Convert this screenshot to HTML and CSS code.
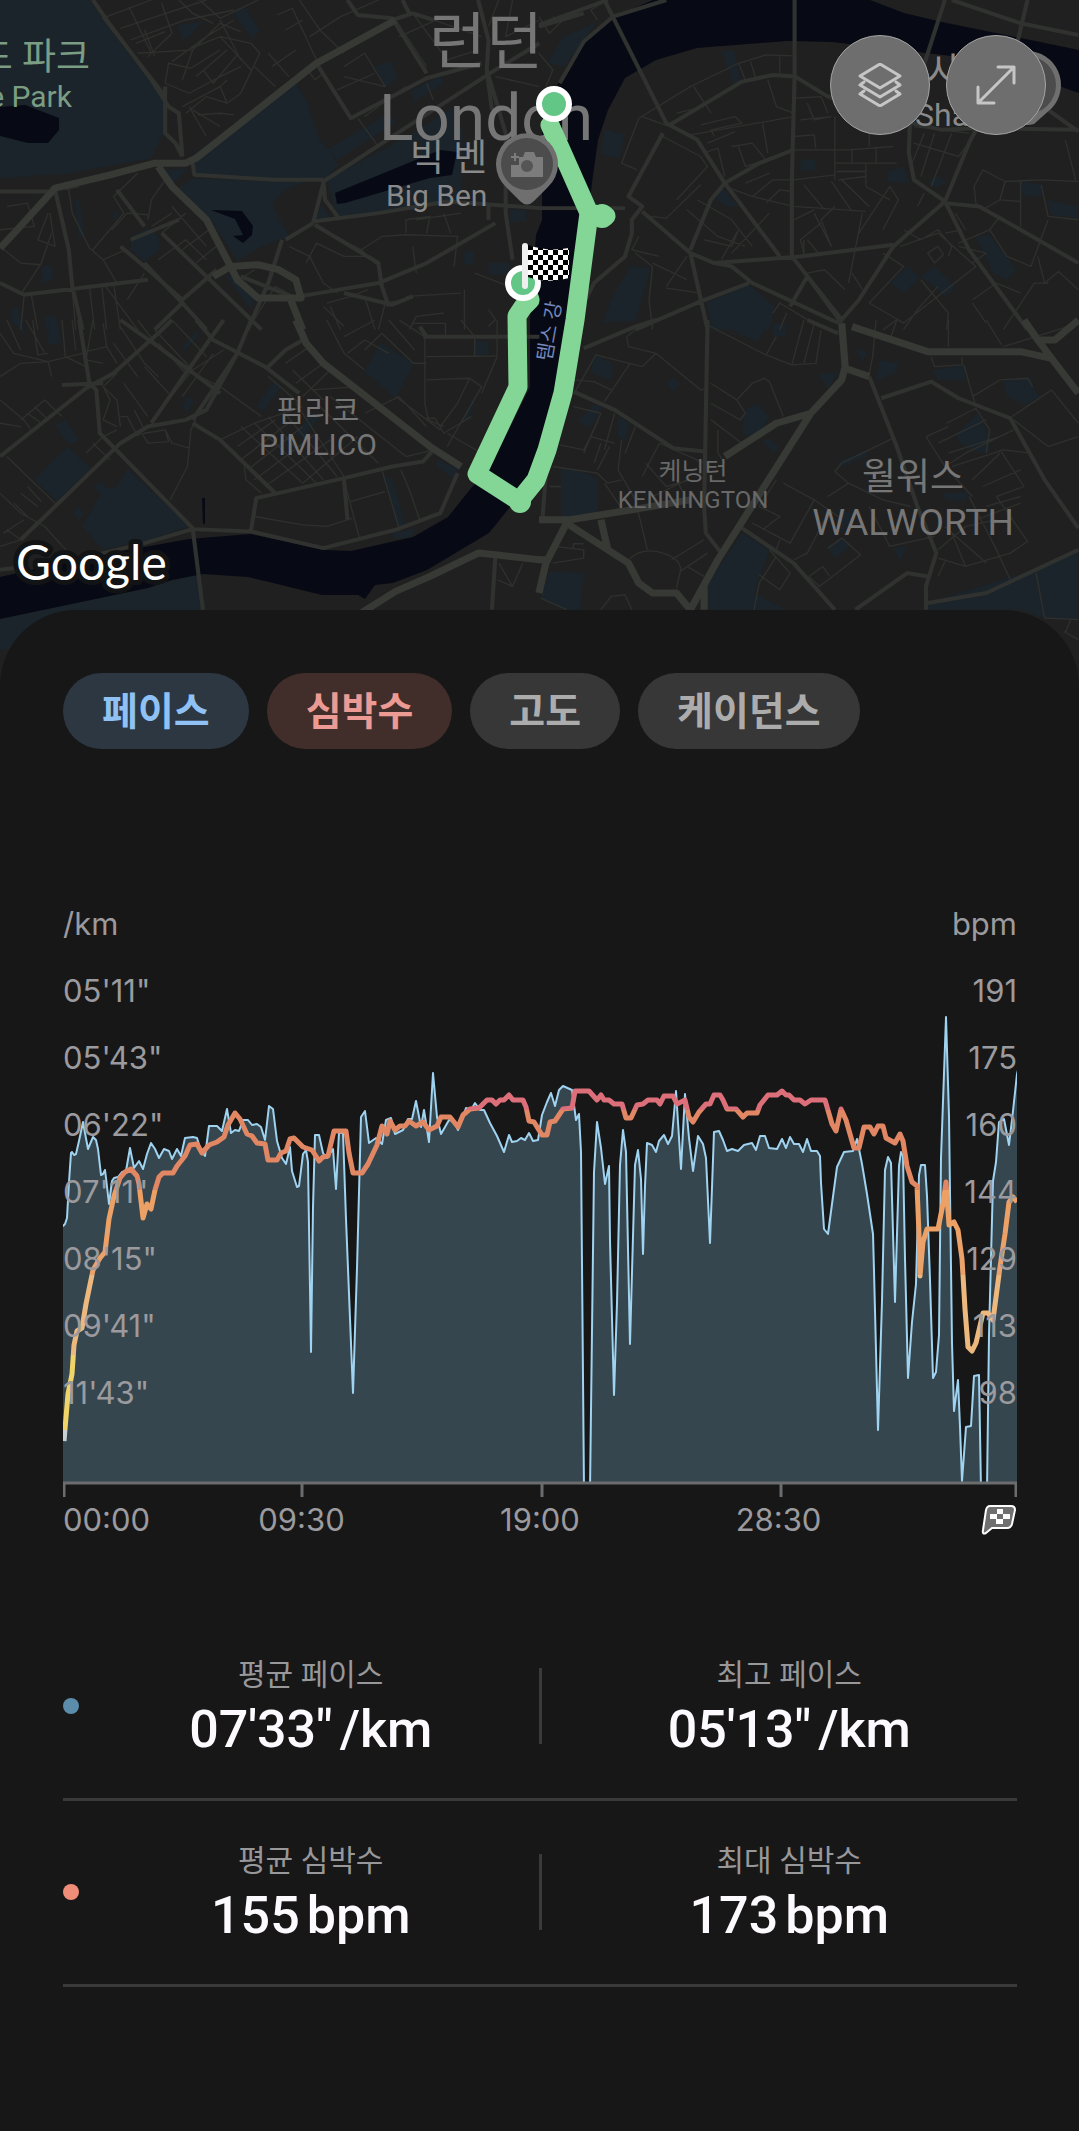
FILE: index.html
```
<!DOCTYPE html>
<html lang="ko">
<head>
    <meta charset="UTF-8">
    <meta name="viewport" content="width=device-width, initial-scale=1.0">
    <title>러닝 상세</title>
    <link rel="stylesheet" href="styles.css">
</head>
<body>
    <div class="map">
        <svg class="map-svg" viewBox="0 0 1079 690">
            <defs>
                <pattern id="checker" x="528" y="245" width="10" height="10" patternUnits="userSpaceOnUse">
                    <rect width="10" height="10" fill="#fff"/>
                    <path d="M0 0h5v5h-5zM5 5h5v5h-5z" fill="#000"/>
                </pattern>
            </defs>
            <rect width="1079" height="690" fill="#202020"/>

            <!-- Parks -->
            <g class="park">
                <g transform="scale(.344 .333)">
                    <path d="M0 0H260L300 60L440 250L475 300L475 400L440 475L200 520L0 535z"/>
                    <path d="M560 465L860 250L890 300L930 420L985 495L940 545L560 525z"/>
                    <path d="M520 565L560 535L790 545L900 540L830 570L790 610L840 710L750 745L690 785L620 670z"/>
                    <path d="M950 540L1200 400L1320 320L1345 400L1340 600L980 655z"/>
                    <path d="M480 510L550 505L500 550zM680 30L715 25L755 90L735 115L690 60zM515 75L590 65L550 110L530 120zM1090 200L1140 185L1155 235L1120 265zM1195 270L1280 230L1290 250L1205 305zM950 450L1130 340L1150 370L980 480z"/>
                    <path d="M380 710L430 685L465 715L465 750L420 785L380 750zM218 600L232 600L245 710L228 710zM325 640L350 635L335 665zM120 800L150 795L155 840L125 850zM1350 755H1378V795H1350zM1420 790H1480V825H1420zM1480 630H1530V665H1480zM915 665L935 615L960 655zM650 820L690 840L740 890L730 930zM30 930L50 920L65 985L35 970zM130 950L160 950L165 990H135z"/>
                </g>
                <g transform="translate(539) scale(.344 .333)">
                    <path d="M25 190L70 110L170 65L130 120L75 200zM530 155L568 150L585 245L565 250zM190 390L250 405L235 475L180 465zM760 480H805V512H760zM1015 515L1060 500L1078 550L1010 545zM1130 545L1160 528L1185 550L1150 562zM515 600L530 560L580 620L545 620zM1400 545L1460 555V590L1405 585zM1475 600L1568 620V655L1490 645z"/>
                    <path d="M265 800L325 805L280 965L185 968L210 900zM485 910L610 855L685 920L670 990H505zM1270 710L1310 705L1388 810L1360 840L1320 820zM1020 850L1070 800L1110 835L1060 880zM1110 830L1150 800L1212 865L1180 890z"/>
                </g>
                <g transform="translate(0 320) scale(.344 .333)">
                    <path d="M0 897L150 865L430 805L560 765H580L590 870V990H0z"/>
                    <path d="M100 480L195 380L265 445L165 545zM240 620L300 510L340 500L370 445L550 620L420 665L300 690zM160 315L190 300L230 360L200 375zM270 500L295 485L320 515L300 530zM210 575L230 560L245 585L230 600zM140 0H165L178 70L140 72zM35 0H65L70 45zM530 80L575 30L580 45L535 95zM545 230L565 245L545 275L528 262zM745 260L795 185L820 200L765 275zM860 345L905 275L930 290L880 355zM1060 155L1105 68L1202 130L1150 235zM1380 60L1420 65V105H1382zM1345 295L1375 235L1380 250L1355 305zM1115 470L1140 475L1180 620L1155 620zM1270 420L1330 445L1315 475L1270 440zM1140 640L1210 625L1190 655L1145 655z"/>
                </g>
                <g transform="translate(539 320) scale(.344 .333)">
                    <path d="M485 800L590 640L670 690L625 820L720 870H490zM1130 850L1440 750L1568 690V900L1470 895L1400 870H1130zM5 830L30 755L130 760L120 870H70zM65 440L120 455L172 475V590H65zM500 0H670L635 65L590 45zM680 10L720 15L715 50L680 45zM160 105L215 130L210 180L150 160zM370 190L390 172L412 192L390 215zM110 305L160 255L185 255L150 325zM230 290L265 310L250 365L228 350z"/>
                    <path d="M590 340L600 270L630 250L670 290L640 340L610 350zM650 365L665 355L700 380L680 400zM810 160H870L840 205zM920 85L955 95L940 130zM990 120L1045 130L1040 155L980 185zM1145 150L1235 135L1240 180H1160zM1350 185L1430 170L1440 210L1460 230L1410 255L1360 230zM1210 345L1275 280L1300 330L1310 395L1280 400L1225 370zM870 425L950 390L955 410L880 440zM840 685L880 655L905 680L862 715zM870 570L910 580L880 645zM1175 520L1250 515L1240 545L1180 540zM1030 685L1070 680L1050 725z"/>
                </g>
            </g>

            <!-- Thames and lakes -->
            <g class="water">
                <path d="M653 0L613 17L584 43L558 83L542 130L542 220L536 235L530 320L530 387L489 470L472 487L448 517L413 537L351 551L324 550L251 534L189 539L83 558L0 577V619L148 588L172 580L203 574L248 577L269 582L322 595L358 595L365 599L375 585L393 583L427 570L489 533L510 507L539 453L554 397L580 283L592 183L598 140L608 110L625 78L656 60L697 48L787 41L832 42L985 60L1079 93V50L942 22L904 13L870 0z"/>
                <path d="M0 107L25 105L59 118V130L48 143H28L0 136zM211 210L242 211L253 226L252 235L243 243L233 236L243 235L235 219zM335 193L440 150L457 152L452 175L430 178L345 203L337 204zM202 498h3v26h-2z"/>
            </g>

            <!-- Side streets -->
            <g class="street">
                <g transform="scale(.344 .333)">
                    <path d="M310 50L440 0M350 85L600 0M380 120L540 60L680 30M400 160L560 150L640 70L700 95M430 170L500 100L470 10M375 20L440 160M420 90L450 170M395 130L480 95M520 0L560 40L620 70M555 145L640 110L730 130M560 150L530 240M480 250L490 190L555 205L640 150M500 185L600 110L680 60M590 210L620 250L690 165M640 110L730 210M570 230L660 150M530 320L640 260L660 240M540 340L600 290L660 310L700 280M600 410L550 320M640 380L560 330M575 345L640 340L680 345M660 310L640 260M480 250L550 280L640 230L700 200M730 130L755 160L700 280"/>
                    <path d="M580 0L640 55L750 0M640 60L700 180M805 45L850 25L920 180M830 90L880 60M870 0L930 90L1000 160M900 110L990 50L1100 0M740 200L800 260M780 160L840 230M790 200L860 150M895 210L915 240L940 220M1000 200L1060 160L1120 260L1000 230M1060 350L1180 260M980 270L1090 220M1150 60L1240 200M1200 40L1300 180L1390 150M1240 250L1260 300M1160 110L1270 60M1100 440L1040 355M1450 0L1420 80M1490 0L1470 110L1568 60M1260 60L1400 110M1440 230L1568 260"/>
                    <path d="M200 570L210 640L260 745L300 780L365 750M190 570L230 560M20 620L80 610L100 680L0 690M0 740L60 790L120 795M140 640L110 720L160 740L145 640M60 885L120 790L150 700M270 750L360 640L330 590L400 520M325 690L370 640L430 645M430 660L440 600L480 540M440 680L500 640M470 700L540 640M530 750L620 680M570 790L640 730M500 620L600 740M460 780L540 720L600 780M90 880L110 990M70 890L60 990M210 870L220 990M260 860L275 990M295 850L310 990M330 850L350 990M300 780L340 850L420 840M370 900L420 820M400 990L300 850"/>
                    <path d="M680 850L740 810M720 990L800 860L870 900M920 680L1050 750L1110 710L1180 705L1330 710L1320 800M1180 700V660L1250 650L1240 700M1210 660L1340 640M890 790L920 730L1000 770L1080 770M840 740L900 770L940 850L980 880M1050 750L1100 800L1110 850M960 920L990 990M1060 890L1090 990M1100 990L1120 910L1180 900M1180 890L1340 880M1350 870V990M1380 820L1480 860M1190 990L1210 950L1290 940M1200 740L1210 820M1290 640L1310 700M950 910L1020 890L1070 870M940 920L1000 980M1420 930L1440 960L1420 980"/>
                </g>
                <g transform="translate(539) scale(.344 .333)">
                    <path d="M0 50L30 100L65 65L40 50M150 30L200 0M150 30L170 60M0 160L40 210L20 260M290 355L240 490L285 510M290 355L440 260L580 190L660 165L740 168M300 350L380 380M450 260L500 340M400 340L480 320M580 190L600 240M615 185L630 235M665 240L690 320L740 340M700 170V225M440 405L660 365L740 350M470 375L570 350L590 370L500 390L510 410M490 430L570 395M650 370L665 460M740 410L800 405L805 445M740 295L820 290L840 340M760 360L850 350M780 310L800 360L850 350M860 350V540M560 440L620 430L660 480L600 500L580 440M480 460L520 445L540 530M360 410L470 470L490 500L400 600M740 450L900 450L1030 440M860 490H1040M865 515H950M980 440V490M910 450V490M950 490V560L1020 600M960 350V440M870 540L950 530M540 560L620 590L740 620L950 635M600 550L670 520M740 540L860 525M620 590L680 540L740 540M660 610L700 570L740 575M770 555L830 630M850 545L910 635M880 540L960 620M800 640L850 740M770 760L760 720L820 670M820 770L780 720M850 740L820 660L860 620"/>
                    <path d="M1090 430L1220 470M1120 400L1080 500M1150 400L1110 530M1200 400L1140 560M1090 380L1250 400M1290 510L1265 560L1270 610L1290 630L1340 600L1355 545L1290 510M1355 545L1460 540L1568 545M1400 545V680M1460 555L1480 650L1568 660M1340 600L1400 605M1310 690L1340 650M1220 730L1310 690L1360 770L1430 800L1480 660M1450 770L1470 850L1510 815L1568 870M1180 700L1230 690M1100 620L1120 580M1220 470L1270 400M1210 640L1240 690M1220 740L1300 760L1260 790M1560 540L1530 420"/>
                    <path d="M320 650L370 655L470 555M290 710L270 750L350 770M280 760L330 800L320 900L330 990M370 860L430 770M370 865L470 880M330 790L430 840M430 630L520 710L600 740M460 600L560 660L620 740M480 720L560 740L580 690M580 690L530 780M670 640L560 760M740 660L800 630M770 720V770M940 640L900 850M930 700L1020 560L1045 600L1000 690M910 820L940 870M780 820L830 810L890 870M1000 760L1060 800L960 910L1060 970L1270 800L1160 700L1050 740M1060 690L1110 720L1160 690L1200 740L1190 770M1130 760L1160 740L1175 765L1150 790zM1110 840L1190 940L1185 990M1160 860L1100 930L1060 990M1260 900L1330 850L1400 880M1300 970L1260 910M1350 990L1440 850L1480 850M680 940L700 910L780 960M700 990L720 940M1000 990L1040 960L1060 970"/>
                </g>
                <g transform="translate(0 320) scale(.344 .333)">
                    <path d="M0 40L40 100L140 125L240 100M75 0L130 100M95 0L110 105L140 100M20 0L60 90M0 170L60 130L140 125L150 170M180 0L190 110L250 140M210 0L220 90M270 0L250 120L300 130M300 10L310 80L250 95M310 80L340 130M330 70L400 170M350 20L420 130L460 170M0 240L70 300L90 330M0 310L60 320M60 300L130 240L180 290M80 280L120 310M100 260L140 300M340 160L300 200L320 240L300 300L340 320M300 200L340 240L350 320M350 290L370 290L400 350M390 270L420 330M360 190L430 290M420 140L490 220M460 70L540 160M340 330L300 350L250 400M270 370L320 420M20 410L100 490L160 550M0 520L60 580L130 620L200 700M10 640L70 600M0 680L60 660M20 630L60 660L100 620M60 520L110 560M40 550L80 590M80 500L120 545M380 350L420 340L480 330L490 365L430 370L415 345M480 330L500 370L550 385L555 330L570 300M550 385L545 440L495 540M450 290L560 150"/>
                    <path d="M400 0L460 80L540 150L640 200L760 290M500 0L600 110M450 30L560 150M620 100L530 230M560 150L650 90M640 360L740 310L880 260M700 320L880 490M740 310L920 490M780 290L940 480M820 270L980 470M860 250L1000 470M690 380L800 300M700 420L850 300M720 450L880 320M740 480L920 340M770 500L960 360M880 490L1040 350M710 440L715 480L760 520M930 260L1100 430M960 230L1180 410L1260 390M910 210L1040 200M880 230L960 150M780 170L870 250M850 150L940 240M830 130L900 80L940 130L860 190M1060 280L1160 230L1240 320"/>
                    <path d="M950 0L1000 100L1060 150M1000 50L1090 0M1060 90L1110 40L1202 130L1240 130M1160 0L1235 50V250L1245 300L1290 320M1130 0L1205 90M1240 110L1445 108V0M1240 180L1365 175L1400 200L1300 380M1365 175L1330 250L1280 320M1240 295H1265L1290 340L1370 290M1060 60L1130 100M1200 10H1295V50M1340 0L1380 50V110M1445 110L1400 220M1300 340L1400 400M1010 100L1060 60M1150 230L1280 330M1000 480L1045 655M1020 545L1120 515M1110 450L1160 625M1165 450L1190 510L1220 600M740 590L880 615L950 620L1025 595M1450 730L1490 800L1520 730M1445 780L1490 800"/>
                </g>
                <g transform="translate(539 320) scale(.344 .333)">
                    <path d="M490 15L660 105L735 135L805 130L820 30M770 0L735 135M800 10L770 130M660 105L690 50M280 30L255 50L260 80L340 100L300 140L165 105L105 215M340 100L470 210L490 205M265 130L190 245M100 180L160 185L210 210M500 190L575 240L600 280L585 300L500 250M575 240L620 190L655 175L670 185L710 290M500 300L590 370M520 330V400L540 430M100 260L180 280L130 400M60 375L130 390L150 350L220 370M180 280L150 350M220 280L190 390M160 430L180 370M170 450L205 380M240 360L230 450L280 540L315 690M280 320L250 400M350 370L300 470M40 440L170 460L200 490L240 480M30 500L65 500M190 490L250 580M350 370L480 430M310 430L370 500L440 480M400 480L440 560M330 530L430 480"/>
                    <path d="M260 720Q300 680 360 700T410 760T400 805M385 720L480 660M410 755L490 700M430 740L480 770M690 480L640 560L700 590L650 630M620 610L730 670L800 540L710 490M700 660L690 690M880 430L1030 355M880 430L860 455L900 490L840 530M900 490L1000 540L1080 560M800 540L870 590M840 685L880 655L935 705L815 800L785 770L825 740L845 770M740 720L780 700L830 600M670 690L730 760L700 810L640 765M690 710L640 790L625 870M960 560L1020 680L1150 650M980 0L970 110L960 160M1190 0V80M1040 0L1020 60M1300 0L1345 75M1568 10L1350 80M1140 110L1150 140L1230 135V110M1235 135L1270 260M1260 230L1340 180L1420 175L1435 200M1375 290L1490 210L1568 310M1380 300L1480 380L1568 350M1185 310L1270 265L1310 330L1300 400M1125 350L1190 320M1125 350L1180 440L1240 400M1160 370L1300 300M1190 400L1340 350M1240 400L1380 330M1200 440L1350 390L1430 400M1180 440L1260 530M1260 480L1340 400M1290 500L1400 450M1340 390L1410 500L1330 530L1420 665L1370 700L1240 740L1160 715M1250 530L1330 690L1370 780M1270 600L1400 550M1180 620L1300 730M1160 690L1240 620L1330 600M1200 640L1240 740M1300 560L1400 530M1160 770L1180 725M40 680L130 690V715L40 730M100 690V672H130M180 870L210 830L250 825L270 870M5 835L80 870M1445 760L1470 895L1568 900M1530 940L1545 900M1525 935L1568 960"/>
                </g>
            </g>

            <!-- Through roads -->
            <g class="road">
                <g transform="scale(.344 .333)">
                    <path d="M270 0L310 60L440 240L490 320L520 340L530 470M480 260L480 400L510 430L530 470M300 50L480 290M920 190L1020 355L1240 235L1400 190M1010 0L1040 45L1140 55L1240 220M1140 60L1200 40L1260 60M1170 0L1190 40M1415 210L1430 330M1390 0L1420 120L1415 210L1470 400V640L1490 780M1568 130L1440 210L1350 270L1200 370L940 545L945 600L985 655M940 550L910 670M910 665L1100 640L1300 605L1568 625M915 675L1100 790L1110 860L1130 920M870 890L1100 850L1240 790L1440 670M1420 620V660M160 570L200 750L210 860L240 990M0 575H140M0 850L70 885L430 840M470 700L760 990M420 790L530 910L600 990M380 720L520 660M350 740L420 800L530 900L630 810M530 910L450 990M420 680L340 570M820 720L780 850L720 990M910 670L830 720M470 510L500 550M560 490L565 525L800 540H940M1000 880L1140 915L1200 890M870 900L700 830"/>
                </g>
                <g transform="translate(539) scale(.344 .333)">
                    <path d="M0 75L200 0M190 0L370 370L460 420L540 550L700 770M0 80L130 40M215 50L370 0M215 50L130 125L60 250M743 0V230L735 540L735 770M380 375L590 245L680 225L745 230L840 290L1000 350L1170 390L1270 385L1568 390M1180 0L1080 320L1075 460L1090 540L1180 605L1250 430L1270 390M1420 0L1390 130M1200 0L1400 70L1568 105M360 400L260 590L300 620L270 660V700L250 770L160 850L120 930M0 625H250M300 635L440 760L510 790L760 770L1030 735M440 760L490 990M510 790L560 800L620 850L870 970M540 550L500 600L440 750M540 550L640 490L740 450M735 770L880 960L930 900L1030 740L1180 605L1250 750L1420 990M1180 610L1280 620L1400 690L1568 790M780 830L730 920M280 990L470 905L610 850M880 970L780 830M1480 330L1568 395"/>
                </g>
                <g transform="translate(0 320) scale(.344 .333)">
                    <path d="M230 0L260 190L280 210L290 340L560 625L590 870M350 0L460 80L640 220M0 410L250 205L330 160L460 40L500 0M180 195L300 190M60 660L350 370L430 320L540 300L600 270L690 100L730 0M650 0L540 160L440 310M570 0L620 60L770 140L870 220M560 310L640 360L800 520M690 100L560 300M780 140L830 90L880 60M240 715L420 670L560 628L730 635L940 685L1150 630L1280 580L1330 460M730 630L745 535L1000 475L1140 440L1230 425L1260 390M1230 50H1568M1440 710L1430 870M0 750L80 740M1220 20L1240 50M1010 600L1000 480"/>
                </g>
                <g transform="translate(539 320) scale(.344 .333)">
                    <path d="M490 0L480 560L485 640L530 700M130 85L280 20L340 0M100 215L220 270L390 385L480 395M995 235L1140 185L1220 235L1370 295L1470 480L1568 625M960 170L1040 380L1100 560L1155 700L1125 800V870M590 625L740 730L860 870M920 870L1070 760L1130 770M1130 850L1300 820L1568 690M780 0L870 40M20 460L10 600"/>
                </g>
            </g>

            <!-- Main roads -->
            <g class="main-road">
                <g transform="scale(.344 .333)">
                    <path d="M0 745L50 690L160 565L320 525L450 490L540 490L570 475L920 190L1150 60M460 500L500 560L600 660L670 800L750 795L810 810L860 840L875 895L750 895L690 840L670 800M670 800L620 830M845 900L880 990"/>
                </g>
                <g transform="translate(0 320) scale(.344 .333)">
                    <path d="M860 0L890 70L940 130L1250 380L1340 440M1050 880L1150 815L1250 770L1390 700L1440 705L1568 720"/>
                </g>
                <g transform="translate(539 320) scale(.344 .333)">
                    <path d="M880 10L890 140L880 180L790 280L520 720L440 870M480 800V870M540 410L600 370L690 310L790 280M910 20L1130 95H1400L1490 115L1568 220M1410 0L1450 60L1490 115M1450 60L1500 60L1568 0M0 600H90L270 570L440 540M80 610L260 730L290 790L330 820L400 820L440 870M80 610L20 730L0 820M0 720H30M890 145L960 170M180 600L200 690"/>
                </g>
            </g>

            <g class="place" text-anchor="middle">
                <text x="486" y="64" font-size="62">런던</text>
                <text x="486" y="140" font-size="64">London</text>
                <text x="318" y="421" font-size="30">핌리코</text>
                <text x="318" y="455" font-size="30">PIMLICO</text>
                <text x="913" y="490" font-size="37">월워스</text>
                <text x="913" y="535" font-size="37">WALWORTH</text>
                <g class="dim">
                    <text x="693" y="480" font-size="25">케닝턴</text>
                    <text x="693" y="508" font-size="24">KENNINGTON</text>
                </g>
            </g>
            <g class="place bright">
                <text x="410" y="171" font-size="37">빅 벤</text>
                <text x="386" y="206" font-size="30">Big Ben</text>
                <text x="927" y="85" font-size="37">샤드</text>
                <text x="915" y="126" font-size="32">Shard</text>
            </g>
            <g class="place green" text-anchor="end">
                <text x="90" y="70" font-size="37">드 파크</text>
                <text x="72" y="107" font-size="30">e Park</text>
            </g>
            <text class="river" x="551" y="362" font-size="20" transform="rotate(-80 551 362)">템스 강</text>

            <!-- Pins -->
            <path d="M1027 51a34 34 0 0 1 25 57L1034 124Q1027 126 1020 124V51z" fill="#6f6f6f"/>
            <circle cx="1027" cy="85" r="29" fill="#4c4c4c"/>

            <!-- Route -->
            <path class="route" d="M550 125L589 213L606 216M589 213L575 320L563 393L547 450L536 480L519 501L477 474L518 387L517 316L523 307L530 300L524 283"/>
            <circle cx="602" cy="216" r="12" fill="#84d696"/>
            <circle cx="520" cy="502" r="11" fill="#84d696"/>
            <path d="M506 187A31 31 0 1 1 548 187L534 201Q527 208 520 201z" fill="#6f6f6f"/>
            <circle cx="527" cy="164" r="26" fill="#4c4c4c"/>
            <path d="M511 165h8v-8h4l2-5h9l2 5h7v20h-32zM514 153h2v3h3v2h-3v3h-2v-3h-3v-2h3z" fill="#7c7c7c"/>
            <circle cx="527" cy="166" r="6" fill="#555"/>
            <circle class="dot-ring" cx="554" cy="104" r="15"/>
            <circle class="dot-ring" cx="523" cy="283" r="15"/>
            <path d="M528 245Q548 252 569 248V278Q548 284 528 277z" fill="url(#checker)"/>
            <rect x="522" y="243" width="6" height="46" rx="3" fill="#efefef"/>

            <text class="google" x="16" y="580" font-size="48">Google</text>
        </svg>
        <div class="map-buttons">
            <button type="button" aria-label="지도 유형">
                <svg width="44" height="44" viewBox="0 0 44 44">
                    <path d="M22 1L42 13L22 25L2 13zM6 19L2 22L22 34L42 22L38 19M6 28L2 31L22 43L42 31L38 28"/>
                </svg>
            </button>
            <button type="button" aria-label="지도 확대">
                <svg width="40" height="40" viewBox="0 0 40 40">
                    <path d="M2 38L38 2M22 2H38V18M2 22V38H18"/>
                </svg>
            </button>
        </div>
    </div>

    <main class="sheet">
        <div class="chips">
            <button type="button" class="chip pace">페이스</button>
            <button type="button" class="chip heart">심박수</button>
            <button type="button" class="chip">고도</button>
            <button type="button" class="chip">케이던스</button>
        </div>

        <div class="chart">
            <svg class="plot" viewBox="0 0 954 540" preserveAspectRatio="none">
                <defs>
                    <!-- Heart rate zones -->
                    <linearGradient id="zones" gradientUnits="userSpaceOnUse" x1="0" y1="0" x2="0" y2="500">
                        <stop offset="30%" stop-color="#dc6f79"/>
                        <stop offset="30%" stop-color="#e28763"/>
                        <stop offset="46%" stop-color="#e28763"/>
                        <stop offset="46%" stop-color="#eea063"/>
                        <stop offset="63%" stop-color="#e9a26c"/>
                        <stop offset="63%" stop-color="#edb87e"/>
                        <stop offset="79%" stop-color="#edb87e"/>
                        <stop offset="79%" stop-color="#f0d468"/>
                        <stop offset="94%" stop-color="#f0d468"/>
                        <stop offset="94%" stop-color="#c9d0d4"/>
                    </linearGradient>
                    <clipPath id="plotClip"><rect width="954" height="522"/></clipPath>
                </defs>
                <g clip-path="url(#plotClip)">
                    <path class="pace-area" d="M-3 530V266L0 266L2 264L4 258L6 222L8 193L9 192L11 195L13 194L16 181L20 162L22 173L25 189L30 177L33 180L35 189L38 215L40 214L42 210L43 218L46 244L49 221L51 218L55 217L59 212L63 211L67 188L71 208L76 201L80 209L84 194L88 183L92 189L96 198L101 189L106 191L109 199L114 189L118 196L122 178L130 177L134 178L138 191L142 196L146 166L154 166L159 171L164 149L168 173L172 170L176 171L180 160L185 160L189 165L194 164L198 167L202 180L206 146L210 149L214 181L219 198L223 204L227 187L229 211L234 227L236 226L240 194L243 190L245 202L248 392L250 247L252 175L256 175L260 193L264 198L270 189L273 229L276 173L280 173L283 259L290 433L294 308L298 157L302 151L306 183L313 178L319 184L323 160L328 158L332 174L340 170L345 159L349 159L353 141L358 167L361 150L366 182L370 113L374 157L378 174L386 160L391 161L395 170L403 148L408 150L412 143L417 150L421 150L427 163L434 176L441 192L446 175L449 182L454 181L458 178L462 180L466 173L470 181L475 180L479 155L484 142L488 133L492 146L496 130L500 126L509 130L513 160L516 154L518 192L521 530H527L531 212L534 162L538 188L542 224L546 206L547 281L551 435L554 343L557 205L560 170L563 192L567 384L572 205L575 190L578 219L580 294L582 226L584 183L589 185L593 192L596 181L601 175L605 184L609 176L613 131L618 209L622 134L626 178L630 211L635 176L640 184L643 198L647 283L651 172L656 171L660 180L664 191L669 189L675 191L681 185L689 183L693 190L697 176L702 176L706 188L714 189L719 179L723 188L727 177L731 184L736 184L740 192L744 179L748 191L754 191L757 196L758 223L761 269L765 274L769 244L774 207L781 192L790 191L794 179L799 204L804 234L810 274L811 311L815 470L819 341L822 210L825 197L828 203L832 342L836 206L838 192L840 196L842 299L845 418L849 362L853 324L856 215L858 205L862 205L864 236L867 320L870 418L873 412L876 375L878 198L883 57L886 156L889 383L891 451L895 420L897 467L899 521L903 467L908 466L911 416L916 415L918 530H924L926 375L930 221L933 202L936 162L941 159L946 185L950 151L954 114L960 90V530z"/>
                    <path class="heart-line" d="M1 481L2 469L5 434L9 414L11 385L14 371L19 368L23 344L30 310L37 298L42 292L46 259L51 236L57 218L62 212L68 209L74 216L76 224L80 258L84 244L88 249L92 230L96 217L100 213L110 213L114 206L122 196L127 185L134 184L139 193L146 185L154 182L161 177L165 165L172 153L177 159L184 174L189 176L194 183L202 184L205 200L214 200L218 193L223 191L227 179L231 178L240 187L249 190L256 201L260 197L265 196L271 171L283 171L286 193L290 213L299 213L305 204L314 185L319 166L324 174L327 161L332 170L337 166L342 166L346 161L353 166L360 162L366 170L374 166L378 157L387 157L395 167L400 155L407 149L416 148L424 140L429 140L433 144L437 140L441 140L446 135L450 140L460 140L463 147L466 161L471 162L479 175L484 175L487 162L492 161L500 149L509 148L512 131L526 131L534 140L538 135L541 140L546 140L551 144L559 144L563 158L568 158L574 145L580 144L585 140L594 140L597 144L601 136L610 136L614 144L622 140L626 157L630 162L636 152L643 144L647 144L651 135L657 135L660 140L664 149L673 149L680 157L684 153L694 153L697 145L705 135L714 135L719 131L723 135L726 135L731 140L737 140L742 144L748 140L762 140L769 164L773 171L778 149L783 160L789 181L791 188L796 188L801 167L807 167L811 174L815 166L820 166L823 178L832 183L837 174L840 181L844 206L849 222L854 226L856 274L857 316L860 282L864 269L875 269L880 244L883 222L886 265L891 262L895 270L899 299L902 349L905 387L909 391L913 383L920 353L925 353L930 360L937 307L942 274L946 242L950 237L954 242"/>
                </g>
                <path class="axis" d="M0 523H954M1 523V537M239 523V537M479 523V537M718 523V537M953 523V537"/>
            </svg>
            <div class="scale">
                <span>/km</span>
                <span>05'11"</span>
                <span>05'43"</span>
                <span>06'22"</span>
                <span>07'11"</span>
                <span>08'15"</span>
                <span>09'41"</span>
                <span>11'43"</span>
            </div>
            <div class="scale right">
                <span>bpm</span>
                <span>191</span>
                <span>175</span>
                <span>160</span>
                <span>144</span>
                <span>129</span>
                <span>113</span>
                <span>98</span>
            </div>
        </div>
        <div class="times">
            <span>00:00</span>
            <span>09:30</span>
            <span>19:00</span>
            <span>28:30</span>
            <svg width="36" height="32" viewBox="0 0 36 32">
                <path d="M9 2H30Q34 2 34 6L31 20Q30 24 26 24H11L5 29Q1 31 2 26L5 6Q6 2 9 2z" fill="#6f6f6f" stroke="#fff" stroke-width="2"/>
                <path d="M16 5h6v5h-6zM9 10h7v5h-7zM22 10h7v5h-7zM15 15h7v5h-7z" fill="#fff"/>
            </svg>
        </div>

        <div class="stats">
            <div class="stat-row">
                <span class="dot blue"></span>
                <div class="stat">
                    <div class="label">평균 페이스</div>
                    <div class="value">07'33"<span class="unit">/km</span></div>
                </div>
                <span class="divider"></span>
                <div class="stat">
                    <div class="label">최고 페이스</div>
                    <div class="value">05'13"<span class="unit">/km</span></div>
                </div>
            </div>
            <div class="stat-row">
                <span class="dot coral"></span>
                <div class="stat">
                    <div class="label">평균 심박수</div>
                    <div class="value">155<span class="unit">bpm</span></div>
                </div>
                <span class="divider"></span>
                <div class="stat">
                    <div class="label">최대 심박수</div>
                    <div class="value">173<span class="unit">bpm</span></div>
                </div>
            </div>
        </div>
    </main>
</body>
</html>
```
FILE: styles.css
```
* {
    box-sizing: border-box;
}

body {
    margin: 0;
    background: #171717;
    color: #fcfaff;
    font-family: Roboto, "Noto Sans CJK KR", sans-serif;
}

button {
    border: none;
    font-family: inherit;
    cursor: pointer;
}

/* Map */
.map {
    position: relative;
    overflow: hidden;
}

.map-svg {
    display: block;
    width: 100%;
}

.park {
    fill: #1b242a;
}

.water {
    fill: #070a15;
}

.street,
.road,
.main-road {
    fill: none;
    stroke: #2e302d;
    stroke-linejoin: round;
}

.street {
    stroke-width: 4px;
}

.road {
    stroke: #30322f;
    stroke-width: 12px;
}

.main-road {
    stroke: #373935;
    stroke-width: 21px;
}

.place {
    fill: #767676;
}

.place .dim {
    fill: #686868;
}

.bright {
    fill: #8a8a8a;
}

.green {
    fill: #7a9d84;
}

.river {
    fill: #7388bb;
}

.route {
    fill: none;
    stroke: #84d696;
    stroke-width: 19px;
    stroke-linecap: round;
    stroke-linejoin: round;
}

.dot-ring {
    fill: #62c686;
    stroke: #fff;
    stroke-width: 6px;
}

.google {
    fill: #fff;
    font-family: Lato, sans-serif;
    stroke: #121314;
    stroke-width: 10px;
    stroke-linejoin: round;
    paint-order: stroke;
}

.map-buttons {
    position: absolute;
    top: 35px;
    right: 33px;
    display: flex;
    gap: 16px;
}

.map-buttons button {
    display: flex;
    align-items: center;
    justify-content: center;
    width: 100px;
    height: 100px;
    padding: 0;
    border: 1px solid #a5a5a5;
    border-radius: 50%;
    background: #6e6e6e;
}

.map-buttons svg {
    fill: none;
    stroke: #c6c6c6;
    stroke-width: 3px;
    stroke-linecap: round;
    stroke-linejoin: round;
}

/* Bottom sheet */
.sheet {
    position: relative;
    margin-top: -80px;
    padding: 63px 62px 80px 63px;
    border-radius: 76px 76px 0 0;
    background: #171717;
}

.chips {
    display: flex;
    flex-wrap: wrap;
    gap: 18px;
}

.chip {
    height: 76px;
    padding: 2px 39px 0;
    border-radius: 38px;
    background: #373737;
    color: #acacac;
    font-size: 39px;
    font-weight: bold;
    line-height: 74px;
    white-space: nowrap;
}

.chip.pace {
    background: #2c3742;
    color: #8fc1f5;
}

.chip.heart {
    background: #412d29;
    color: #eb9b94;
}

/* Chart */
.chart {
    display: grid;
    margin-top: 141px;
    height: 610px;
}

.plot,
.scale {
    grid-area: 1 / 1;
}

.plot {
    align-self: end;
    width: 100%;
    height: 540px;
}

.pace-area {
    fill: #36464f;
    stroke: #9fd3f0;
    stroke-width: 2px;
    stroke-linejoin: round;
}

.heart-line {
    fill: none;
    stroke: url(#zones);
    stroke-width: 5px;
    stroke-linejoin: round;
}

.axis {
    fill: none;
    stroke: #6a6c6e;
    stroke-width: 3px;
}

.scale,
.times {
    color: #9b9a9e;
    font-family: Inter, sans-serif;
    font-size: 31px;
}

.scale {
    position: relative;
    display: flex;
    flex-direction: column;
    line-height: 67px;
}

.scale.right {
    text-align: right;
}

.times {
    display: grid;
    grid-template-columns: 1fr 2fr 2fr 2fr 1fr;
    line-height: 40px;
    text-align: center;
}

.times span:first-child {
    text-align: left;
    white-space: nowrap;
}

.times svg {
    justify-self: end;
    align-self: center;
}

/* Stats */
.stats {
    margin-top: 75px;
}

.stat-row {
    display: flex;
    align-items: center;
    height: 186px;
    padding-bottom: 2px;
    border-bottom: 3px solid #3a3a3b;
}

.dot {
    width: 16px;
    height: 16px;
    margin-right: 4px;
    border-radius: 50%;
}

.dot.blue {
    background: #5b8caa;
}

.dot.coral {
    background: #f08d78;
}

.stat {
    flex: 1;
    padding-top: 6px;
    text-align: center;
}

.divider {
    width: 3px;
    height: 76px;
    margin-right: 20px;
    background: #3a3a3b;
}

.label {
    color: #98979a;
    font-size: 30px;
    line-height: 42px;
}

.value {
    font-size: 52px;
    font-weight: 500;
    line-height: 68px;
}

.unit {
    margin-left: 7px;
}
```
